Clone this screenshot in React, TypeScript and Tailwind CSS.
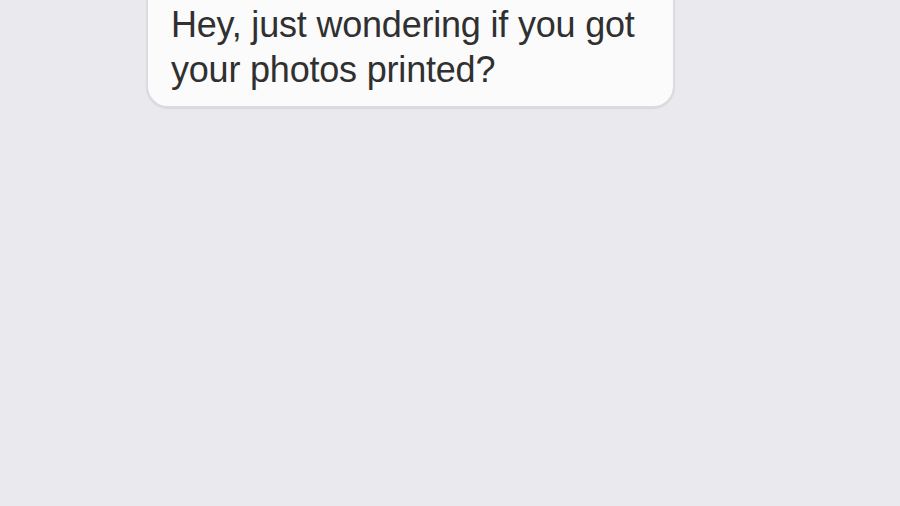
export default function App() {
  return (
    <div className="w-[900px] h-[506px] bg-[#e9e9ee] overflow-hidden relative" style={{ fontFamily: '"Liberation Sans", Arial, sans-serif' }}>
      <div className="ml-[146px] mt-[-28px] w-[529px] rounded-[22px] border-2 border-[#dcdcdf] bg-[#fbfbfc] pl-[23px] pt-[28px] pb-[14px] shadow-[0_1px_1px_rgba(0,0,0,0.08)]">
        <p className="text-[36px] leading-[45px] text-[#303030] tracking-[-0.2px]">
          Hey, just wondering if you got<br />your photos printed?
        </p>
      </div>
    </div>
  );
}
